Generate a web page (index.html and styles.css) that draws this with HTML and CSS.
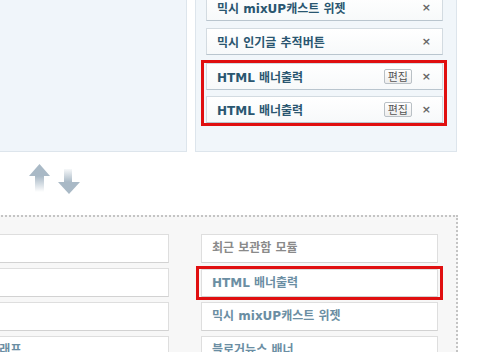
FILE: index.html
```html
<!DOCTYPE html>
<html lang="ko">
<head>
    <meta charset="UTF-8">
    <title>모듈 설정</title>
    <link rel="stylesheet" href="styles.css">
</head>
<body>

    <div class="top">
        <div class="panel-left"></div>
        <div class="panel-right">
            <div class="used-list">
                <div class="used-item"><span class="name">믹시 mixUP캐스트 위젯</span><span class="del">×</span></div>
                <div class="used-item"><span class="name">믹시 인기글 추적버튼</span><span class="del">×</span></div>
                <div class="mark mark-top">
                    <div class="used-item"><span class="name">HTML 배너출력</span><span class="edit-btn">편집</span><span class="del">×</span></div>
                    <div class="used-item"><span class="name">HTML 배너출력</span><span class="edit-btn">편집</span><span class="del">×</span></div>
                </div>
            </div>
        </div>
    </div>

    <div class="arrows">
        <svg width="60" height="40" viewBox="0 0 60 40">
            <defs>
                <linearGradient id="fadeDown" x1="0" y1="0" x2="0" y2="1">
                    <stop offset="0" stop-color="#a9b9c6"/>
                    <stop offset="1" stop-color="#a9b9c6" stop-opacity="0"/>
                </linearGradient>
                <linearGradient id="fadeUp" x1="0" y1="1" x2="0" y2="0">
                    <stop offset="0" stop-color="#a9b9c6"/>
                    <stop offset="1" stop-color="#a9b9c6" stop-opacity="0.1"/>
                </linearGradient>
            </defs>
            <polygon points="4,16 14.5,4 25,16" fill="#a9b9c6"/>
            <rect x="10" y="16" width="9" height="16" fill="url(#fadeDown)"/>
            <rect x="39" y="9" width="8" height="13" fill="url(#fadeUp)"/>
            <polygon points="33,22 44,34 55,22" fill="#a9b9c6"/>
        </svg>
    </div>

    <div class="bottom">
        <div class="col">
            <div class="pool-item"></div>
            <div class="pool-item"></div>
            <div class="pool-item"></div>
            <div class="pool-item shifted">방문자 그래프</div>
        </div>
        <div class="col">
            <div class="pool-item gray">최근 보관함 모듈</div>
            <div class="mark mark-bottom">
                <div class="pool-item">HTML 배너출력</div>
            </div>
            <div class="pool-item">믹시 mixUP캐스트 위젯</div>
            <div class="pool-item">블로거뉴스 배너</div>
        </div>
    </div>

</body>
</html>
```

FILE: styles.css
```css
body {
    margin: 0;
    width: 478px;
    height: 352px;
    overflow: hidden;
    background: #ffffff;
    font-family: "DejaVu Sans", "Noto Sans CJK KR", sans-serif;
    font-size: 12px;
}

/* top: modules in use */
.top {
    display: flex;
    gap: 8px;
    height: 152px;
    overflow: hidden;
}

.panel-left {
    width: 186px;
    background: #f0f5fa;
    border-right: 1px solid #dde5ec;
    border-bottom: 1px solid #dde5ec;
}

.panel-right {
    width: 260px;
    background: #f1f6fa;
    border: 1px solid #dde5ec;
    border-top: none;
}

.used-list {
    display: flex;
    flex-direction: column;
    gap: 7px;
    margin-top: -6px;
    padding-left: 10px;
}

.used-item {
    box-sizing: border-box;
    display: flex;
    align-items: center;
    flex-shrink: 0;
    width: 237px;
    height: 27px;
    padding: 0 11px 0 10px;
    background: linear-gradient(to bottom, #ffffff, #f7f9fa);
    border: 1px solid #d3dbe1;
    border-bottom-color: #b9c5ce;
    color: #2a5670;
    font-weight: bold;
}

.used-item .name {
    flex-grow: 1;
}

.edit-btn {
    box-sizing: border-box;
    width: 28px;
    height: 15px;
    line-height: 13px;
    text-align: center;
    font-family: "Noto Sans CJK KR", sans-serif;
    font-size: 11px;
    font-weight: normal;
    color: #555;
    background: linear-gradient(to bottom, #ffffff, #eeeeee);
    border: 1px solid #b9c0c5;
    border-radius: 2px;
    margin-right: 10px;
}

.del {
    color: #666;
    font-size: 11px;
}

/* red highlight boxes */
.mark {
    flex-shrink: 0;
    border: 3px solid #e00f10;
}

.mark-top {
    display: flex;
    flex-direction: column;
    gap: 6px;
    width: 237px;
    margin: -2px 0 0 -5px;
    padding: 0 1px 0 2px;
}

.mark-bottom {
    width: 237px;
    margin: -2px 0 -3px -5px;
    padding: 0 2px;
}

.mark-bottom .pool-item {
    height: 28px;
}

/* arrows */
.arrows {
    height: 55px;
    padding: 8px 0 0 25px;
}

.arrows svg {
    display: block;
}

/* bottom: module pool */
.bottom {
    display: flex;
    align-items: flex-start;
    gap: 32px;
    width: 524px;
    height: 118px;
    overflow: hidden;
    margin-left: -70px;
    padding: 17px 0 0 2px;
    background: #f7f7f7;
    border-top: 2px dotted #c4c4c4;
    border-right: 2px dotted #c4c4c4;
}

.col {
    display: flex;
    flex-direction: column;
    gap: 5px;
}

.pool-item {
    box-sizing: border-box;
    flex-shrink: 0;
    width: 237px;
    height: 29px;
    line-height: 27px;
    padding-left: 10px;
    background: #ffffff;
    border: 1px solid #dedede;
    border-bottom-color: #d2d2d2;
    color: #6b8ea3;
    font-weight: bold;
}

.pool-item.gray {
    color: #8a8a8a;
}

.pool-item.shifted {
    padding-left: 18px;
}
```
